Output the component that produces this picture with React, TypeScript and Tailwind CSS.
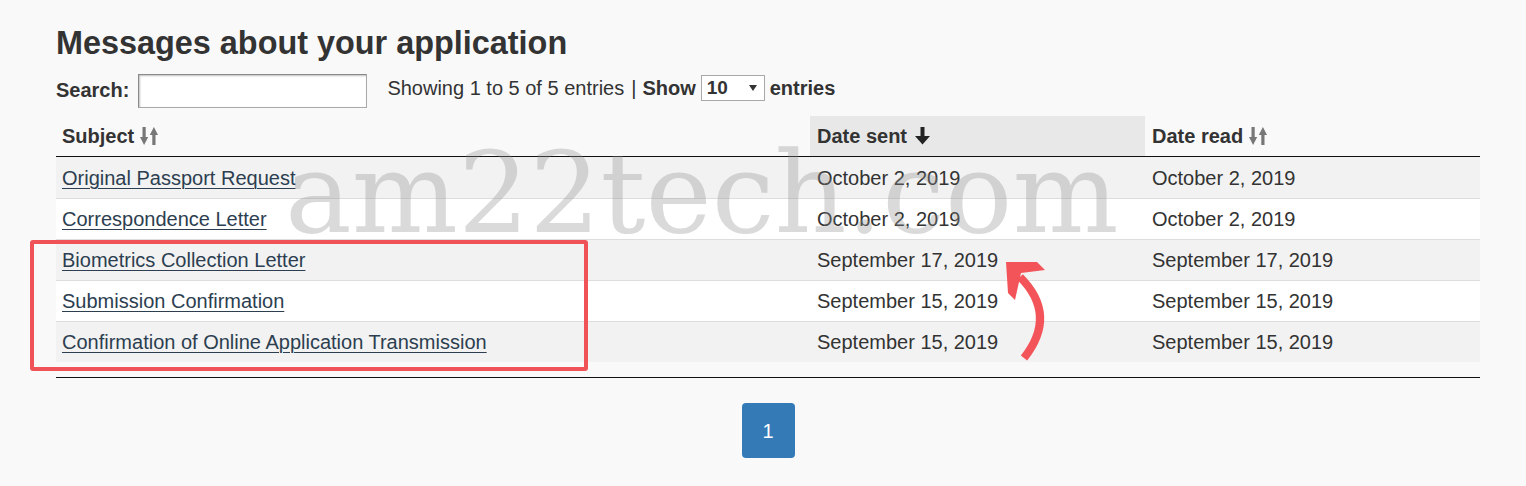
import React from "react";

const SortBoth = () => (
  <svg width="18" height="18" viewBox="0 0 18 18" className="block">
    <rect x="2.5" y="0" width="3.2" height="12" fill="#777" />
    <polygon points="0,10 8.2,10 4.1,18" fill="#777" />
    <rect x="12.3" y="6" width="3.2" height="12" fill="#777" />
    <polygon points="9.8,8 18,8 13.9,0" fill="#777" />
  </svg>
);

const SortDown = () => (
  <svg width="15" height="18" viewBox="0 0 15 18" className="block">
    <rect x="5.5" y="0" width="4" height="10" fill="#222" />
    <polygon points="0,9 15,9 7.5,17.5" fill="#222" />
  </svg>
);

const rows = [
  ["Original Passport Request", "October 2, 2019", "October 2, 2019"],
  ["Correspondence Letter", "October 2, 2019", "October 2, 2019"],
  ["Biometrics Collection Letter", "September 17, 2019", "September 17, 2019"],
  ["Submission Confirmation", "September 15, 2019", "September 15, 2019"],
  ["Confirmation of Online Application Transmission", "September 15, 2019", "September 15, 2019"],
];

export default function App() {
  return (
    <div className="relative w-full h-[486px] overflow-hidden bg-[#f9f9f9] text-[#333] font-['Liberation_Sans',Arial,sans-serif]">
      <div className="pl-[56px] pr-[46px] pt-[25px]">
        <h1 className="text-[32.4px] leading-[36px] font-bold text-[#333]">Messages about your application</h1>

        <div className="mt-[12px] h-[36px] flex items-start">
          <span className="mt-[5px] text-[20px] leading-[24px] font-bold">Search:</span>
          <div className="ml-[9px] mt-[1px] w-[229px] h-[34px] bg-white border border-[#a9a9a9] border-t-[#8a8a8a] border-l-[#8a8a8a] shadow-[inset_1px_1px_2px_rgba(0,0,0,0.25)]" />
          <div className="ml-[20px] mt-[2px] flex items-center h-[26px] text-[20px] leading-[24px]">
            <span>Showing 1 to 5 of 5 entries</span>
            <span className="ml-[7px]">|</span>
            <span className="ml-[6px] font-bold">Show</span>
            <div className="ml-[5px] w-[64px] h-[26px] bg-white border border-[#a9a9a9] flex items-center pl-[5px] pr-[7px] justify-between">
              <span className="font-bold text-[19px] leading-[22px]">10</span>
              <svg width="8" height="6" viewBox="0 0 8 6" className="block"><polygon points="0,0 8,0 4,6" fill="#333" /></svg>
            </div>
            <span className="ml-[5px] font-bold">entries</span>
          </div>
        </div>

        <div className="mt-[7px]">
          <div className="grid grid-cols-[754px_335px_335px] h-[41px] border-b border-[#111] text-[20px] font-bold">
            <div className="flex items-center pl-[6px] gap-[6px]">
              <span>Subject</span>
              <SortBoth />
            </div>
            <div className="flex items-center pl-[7px] gap-[8px] bg-[#e8e8e8]">
              <span>Date sent</span>
              <SortDown />
            </div>
            <div className="flex items-center pl-[7px] gap-[6px]">
              <span>Date read</span>
              <SortBoth />
            </div>
          </div>
          {rows.map((r, i) => (
            <div
              key={i}
              className={
                "grid grid-cols-[754px_335px_335px] h-[41px] text-[20px] leading-[24px] " +
                (i % 2 === 0 ? "bg-[#f2f2f2] " : "bg-white ") +
                (i > 0 ? "border-t border-[#dddddd]" : "")
              }
            >
              <div className="flex items-center pl-[6px]">
                <a href="#" className="text-[#2c3e50] underline underline-offset-[3px] decoration-1">{r[0]}</a>
              </div>
              <div className="flex items-center pl-[7px]">{r[1]}</div>
              <div className="flex items-center pl-[7px]">{r[2]}</div>
            </div>
          ))}
          <div className="h-[16px] border-b border-[#111]" />
          <div className="mt-[25px] flex justify-center">
            <div className="w-[53px] h-[55px] rounded-[4px] bg-[#337ab7] text-white text-[20px] flex items-center justify-center">1</div>
          </div>
        </div>
      </div>

      <div className="absolute left-[285px] top-[137px] text-[112px] leading-none font-['DejaVu_Serif',serif] text-[#8c8c8c52] pointer-events-none whitespace-nowrap">
        am22tech.com
      </div>

      <div className="absolute left-[30px] top-[240px] w-[558px] h-[131px] border-4 border-[#ef5257] rounded-[3px] pointer-events-none" />

      <svg className="absolute left-0 top-0 pointer-events-none" width="1526" height="486" viewBox="0 0 1526 486">
        <path d="M1020 277 Q1058 315 1024 358" stroke="#f2545a" strokeWidth="8" fill="none" />
        <polygon points="1006,262 1037,262 1045,270 1021,273 1015,300 1008,293" fill="#f2545a" />
      </svg>
    </div>
  );
}
